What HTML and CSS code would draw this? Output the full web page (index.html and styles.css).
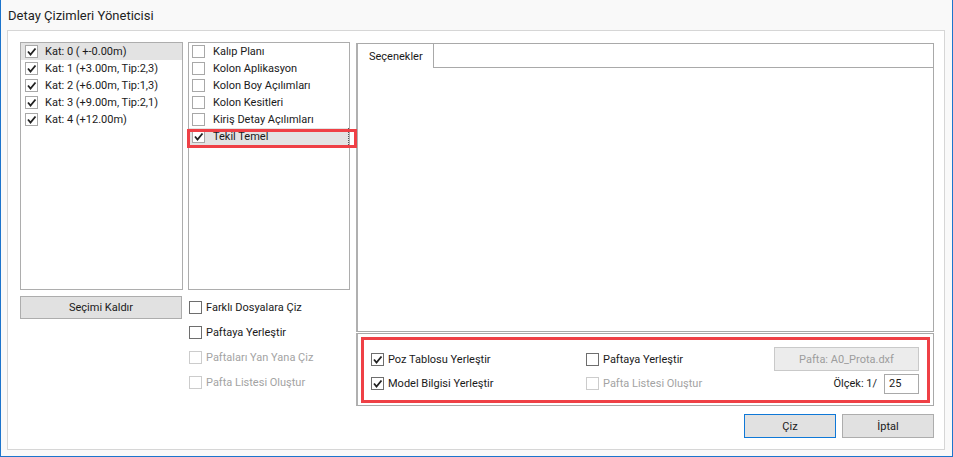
FILE: index.html
```html
<!DOCTYPE html>
<html lang="tr">
<head>
    <meta charset="UTF-8">
    <title>Detay Çizimleri Yöneticisi</title>
    <link rel="stylesheet" href="styles.css">
</head>
<body>
    <div class="window">
        <div class="titlebar">Detay Çizimleri Yöneticisi</div>
        <div class="panel">
            <div class="main">
                <!-- floors -->
                <div class="col col-floors">
                    <div class="listbox">
                        <div class="item selected"><span class="cb checked"><svg viewBox="0 0 11 11"><polyline points="2,5.5 4.5,8.5 9.5,2.5"/></svg></span>Kat: 0 ( +-0.00m)</div>
                        <div class="item"><span class="cb checked"><svg viewBox="0 0 11 11"><polyline points="2,5.5 4.5,8.5 9.5,2.5"/></svg></span>Kat: 1 (+3.00m, Tip:2,3)</div>
                        <div class="item"><span class="cb checked"><svg viewBox="0 0 11 11"><polyline points="2,5.5 4.5,8.5 9.5,2.5"/></svg></span>Kat: 2 (+6.00m, Tip:1,3)</div>
                        <div class="item"><span class="cb checked"><svg viewBox="0 0 11 11"><polyline points="2,5.5 4.5,8.5 9.5,2.5"/></svg></span>Kat: 3 (+9.00m, Tip:2,1)</div>
                        <div class="item"><span class="cb checked"><svg viewBox="0 0 11 11"><polyline points="2,5.5 4.5,8.5 9.5,2.5"/></svg></span>Kat: 4 (+12.00m)</div>
                    </div>
                    <button class="btn btn-clear">Seçimi Kaldır</button>
                </div>

                <!-- drawing types -->
                <div class="col col-drawings">
                    <div class="listbox">
                        <div class="item"><span class="cb"></span>Kalıp Planı</div>
                        <div class="item"><span class="cb"></span>Kolon Aplikasyon</div>
                        <div class="item"><span class="cb"></span>Kolon Boy Açılımları</div>
                        <div class="item"><span class="cb"></span>Kolon Kesitleri</div>
                        <div class="item"><span class="cb"></span>Kiriş Detay Açılımları</div>
                        <div class="item selected focused"><span class="cb checked"><svg viewBox="0 0 11 11"><polyline points="2,5.5 4.5,8.5 9.5,2.5"/></svg></span>Tekil Temel</div>
                        <div class="mark mark-row"></div>
                    </div>
                    <div class="options">
                        <label class="check"><span class="cb"></span>Farklı Dosyalara Çiz</label>
                        <label class="check"><span class="cb"></span>Paftaya Yerleştir</label>
                        <label class="check disabled"><span class="cb"></span>Paftaları Yan Yana Çiz</label>
                        <label class="check disabled"><span class="cb"></span>Pafta Listesi Oluştur</label>
                    </div>
                </div>

                <!-- settings -->
                <div class="col col-settings">
                    <div class="tabs">
                        <div class="tabstrip">
                            <div class="tab">Seçenekler</div>
                        </div>
                        <div class="tabpage"></div>
                    </div>
                    <div class="group">
                        <div class="mark group-grid">
                            <label class="check"><span class="cb checked"><svg viewBox="0 0 11 11"><polyline points="2,5.5 4.5,8.5 9.5,2.5"/></svg></span>Poz Tablosu Yerleştir</label>
                            <label class="check"><span class="cb"></span>Paftaya Yerleştir</label>
                            <button class="btn btn-sheet" disabled>Pafta: A0_Prota.dxf</button>
                            <label class="check"><span class="cb checked"><svg viewBox="0 0 11 11"><polyline points="2,5.5 4.5,8.5 9.5,2.5"/></svg></span>Model Bilgisi Yerleştir</label>
                            <label class="check disabled"><span class="cb"></span>Pafta Listesi Oluştur</label>
                            <div class="scale">Ölçek: 1/ <span class="field">25</span></div>
                        </div>
                    </div>
                </div>
            </div>

            <div class="actions">
                <button class="btn btn-action btn-default">Çiz</button>
                <button class="btn btn-action">İptal</button>
            </div>
        </div>
    </div>
</body>
</html>
```

FILE: styles.css
```css
* {
    box-sizing: border-box;
}
body {
    margin: 0;
    background: #ffffff;
    font-family: Roboto, 'Noto Sans', sans-serif;
    font-size: 11px;
    color: #1a1a1a;
}
.window {
    width: 953px;
    height: 457px;
    background-color: #f9f9f9;
    border: 1px solid #1c74cc;
    border-top: none;
}
.titlebar {
    height: 30px;
    padding-left: 7px;
    line-height: 31px;
    font-size: 13px;
    color: #1f1f1f;
}
.panel {
    margin: 0 7px 0 6px;
    height: 420px;
    background-color: #ffffff;
    border: 1px solid #d6d6d6;
    padding: 11px 10px 0 12px;
}
.main {
    display: flex;
}
.col-floors {
    width: 163px;
    margin-right: 5px;
}
.col-drawings {
    width: 162px;
    margin-right: 6px;
}
.col-settings {
    width: 578px;
}

/* list boxes */
.listbox {
    position: relative;
    height: 248px;
    border: 1px solid #adadad;
    background: #fff;
}
.item {
    display: flex;
    align-items: center;
    height: 17px;
    white-space: nowrap;
}
.item.selected {
    background-color: #e3e3e3;
}
.item.focused {
    border-right: 1px dotted #555;
}
.col-floors .item .cb {
    margin: 0 7px 0 4px;
}
.col-drawings .item .cb {
    margin: 0 8px 0 3px;
}

/* checkbox */
.cb {
    display: inline-flex;
    flex: none;
    width: 13px;
    height: 13px;
    border: 1px solid #a8a8a8;
    background: #fff;
}
.cb svg {
    width: 11px;
    height: 11px;
    fill: none;
    stroke: #222;
    stroke-width: 1.8;
}
.check {
    display: flex;
    align-items: center;
    white-space: nowrap;
}
.check .cb {
    border-color: #6e6e6e;
    margin-right: 4px;
}
.check.disabled {
    color: #a3a3a3;
}
.check.disabled .cb {
    border-color: #cccccc;
}

/* buttons */
.btn {
    font-family: inherit;
    font-size: 11px;
    color: #1a1a1a;
    background-color: #e1e1e1;
    border: 1px solid #adadad;
    padding: 0;
}
.btn-clear {
    display: block;
    width: 162px;
    height: 23px;
    margin-top: 6px;
}
.options {
    margin-top: 5px;
    padding-left: 1px;
}
.options .check {
    height: 25px;
}

/* tabs */
.tabs {
    margin-top: 1px;
    height: 289px;
    border: 1px solid #a9a9a9;
    border-left: 2px solid #b0b0b0;
    display: flex;
    flex-direction: column;
}
.tabstrip {
    display: flex;
    height: 24px;
    border-bottom: 1px solid #a9a9a9;
}
.tab {
    width: 76px;
    height: 24px;
    margin-bottom: -1px;
    background: #fff;
    border-right: 1px solid #a9a9a9;
    padding-left: 11px;
    line-height: 25px;
}
.tabpage {
    flex: 1;
}

/* group */
.group {
    margin-top: 1px;
    height: 73px;
    border: 1px solid #a9a9a9;
    border-left: 2px solid #b0b0b0;
    padding: 3px 3px 2px 3px;
}
.mark {
    border: 3px solid #ef4046;
}
.mark-row {
    position: absolute;
    left: -2px;
    top: 86px;
    width: 170px;
    height: 19px;
}
.group-grid {
    height: 66px;
    display: grid;
    grid-template-columns: 215px 1fr auto;
    grid-template-rows: 24px 23px;
    row-gap: 1px;
    padding: 7px 8px 0 7px;
    align-items: center;
}
.btn-sheet {
    width: 145px;
    height: 24px;
    color: #9d9d9d;
    background-color: #ececec;
    border-color: #c9c9c9;
}
.scale {
    display: flex;
    align-items: center;
    justify-content: flex-end;
}
.field {
    width: 35px;
    height: 20px;
    margin-left: 7px;
    border: 1px solid #a9a9a9;
    padding-left: 4px;
    line-height: 18px;
}

/* bottom buttons */
.actions {
    display: flex;
    justify-content: flex-end;
    margin-top: 8px;
    gap: 6px;
}
.btn-action {
    width: 92px;
    height: 24px;
}
.btn-default {
    border-color: #0f78d7;
}
```
